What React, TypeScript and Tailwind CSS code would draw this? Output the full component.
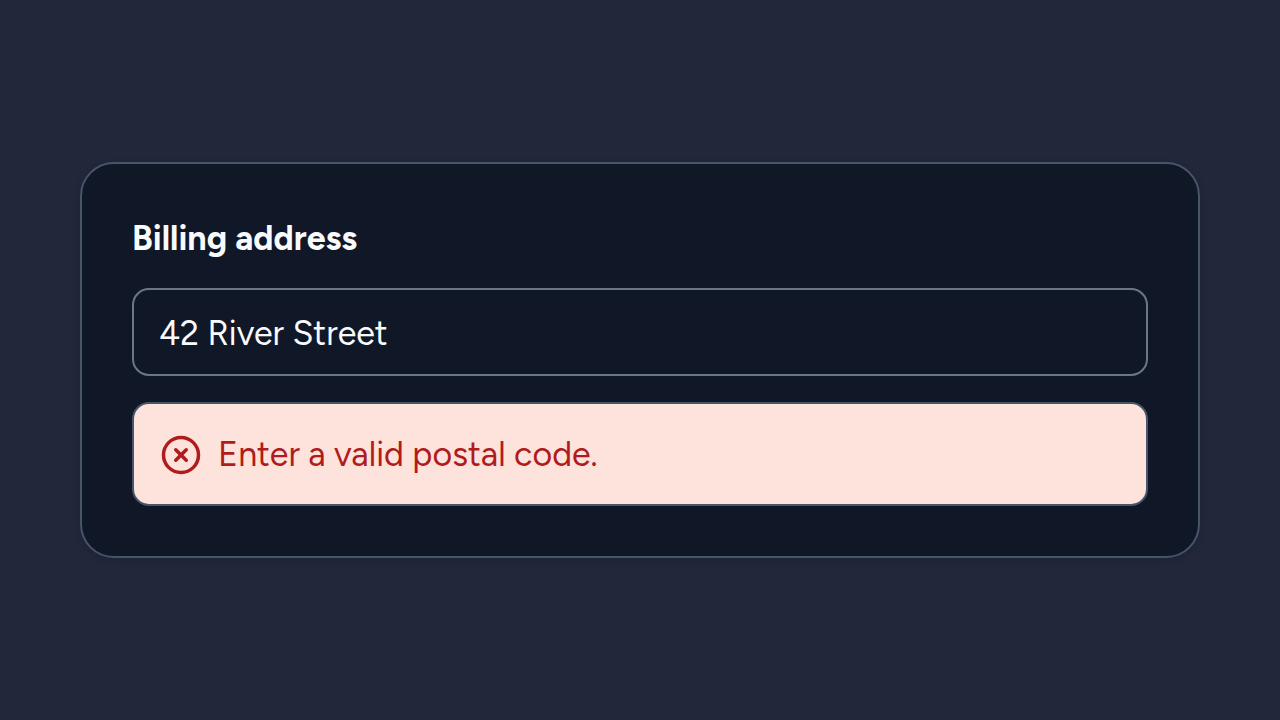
import { useState } from 'react';
import { CircleX } from 'lucide-react';

const App = () => {
  const [address, setAddress] = useState('42 River Street');

  return (
    <main className="flex min-h-screen items-center bg-[#222739] px-20 font-['Figtree','Inter',sans-serif] text-[34px] leading-[50px]">
      <form className="flex w-full flex-col rounded-[34px] border-2 border-[#475569] bg-[#101726] p-[50px] shadow-[0_2px_6px_rgba(17,34,51,0.3)]">
        <label htmlFor="address" className="mb-6 font-bold text-slate-50">
          Billing address
        </label>
        <input
          id="address"
          type="text"
          value={address}
          onChange={(e) => setAddress(e.target.value)}
          aria-describedby="address-error"
          className="mb-[26px] h-[88px] w-full rounded-[17px] border-2 border-[#6b7688] bg-transparent px-[25px] pt-0.5 text-slate-50 outline-none"
        />
        <div
          id="address-error"
          role="alert"
          className="flex items-center gap-4 rounded-[17px] border-2 border-[#475569] bg-[#fee2dc] px-[26px] pt-[26px] pb-6 text-[#b01c1c]"
        >
          <CircleX size={42} className="shrink-0" aria-hidden="true" />
          <p>Enter a valid postal code.</p>
        </div>
      </form>
    </main>
  );
};

export default App;
